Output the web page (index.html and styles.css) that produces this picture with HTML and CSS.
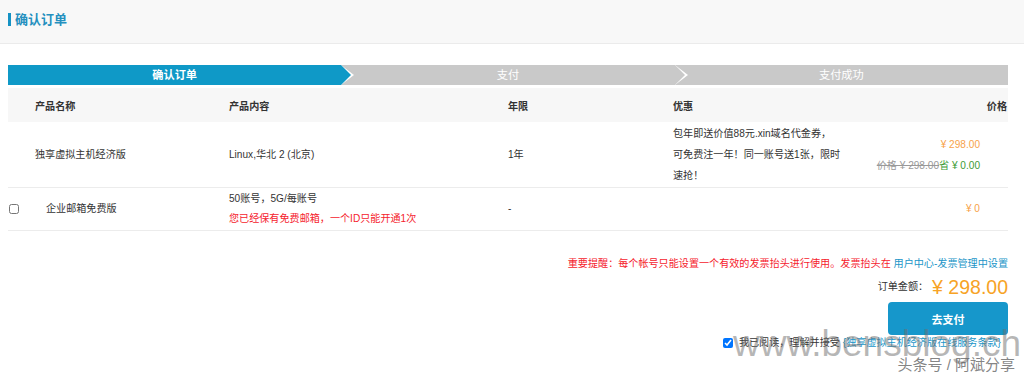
FILE: index.html
```html
<!DOCTYPE html>
<html lang="zh-CN">
  <head>
    <meta charset="UTF-8" />
    <title>确认订单</title>
    <link rel="stylesheet" href="styles.css">
  </head>
  <body>
    <div class="page-header">
      <h1 class="page-title">确认订单</h1>
    </div>

    <div class="main">
      <div class="steps">
        <div class="step active">确认订单</div>
        <div class="step">支付</div>
        <div class="step last">支付成功</div>
      </div>

      <table class="order-table">
        <colgroup>
          <col class="c-name" />
          <col class="c-content" />
          <col class="c-year" />
          <col class="c-promo" />
          <col class="c-price" />
        </colgroup>
        <thead>
          <tr>
            <th>产品名称</th>
            <th>产品内容</th>
            <th>年限</th>
            <th>优惠</th>
            <th class="price">价格</th>
          </tr>
        </thead>
        <tbody>
          <tr class="row-main">
            <td>独享虚拟主机经济版</td>
            <td>Linux,华北 2 (北京)</td>
            <td>1年</td>
            <td>包年即送价值88元.xin域名代金券，<br />可免费注一年！同一账号送1张，限时<br />速抢！</td>
            <td class="price">
              <div class="orange">¥ 298.00</div>
              <div><span class="old">价格 ¥ 298.00</span><span class="save">省 ¥ 0.00</span></div>
            </td>
          </tr>
          <tr class="row-extra">
            <td>
              <div class="name-check">
                <input type="checkbox" class="box" />
                <span>企业邮箱免费版</span>
              </div>
            </td>
            <td>
              <div>50账号，5G/每账号</div>
              <div class="warn">您已经保有免费邮箱，一个ID只能开通1次</div>
            </td>
            <td>-</td>
            <td></td>
            <td class="price"><span class="orange">¥ 0</span></td>
          </tr>
        </tbody>
      </table>

      <div class="summary">
        <p class="notice">重要提醒：每个帐号只能设置一个有效的发票抬头进行使用。发票抬头在 <a href="#">用户中心-发票管理中设置</a></p>
        <div class="total">订单金额：<span class="amount">¥ 298.00</span></div>
        <button class="pay-btn">去支付</button>
        <label class="agree">
          <input type="checkbox" class="box" checked />
          我已阅读，理解并接受 <a href="#">{独享虚拟主机经济版在线服务条款}</a>
        </label>
      </div>
    </div>

    <div class="watermark">
      <div class="wm-site">www.bensblog.ch</div>
      <div class="wm-name">头条号 / 阿斌分享</div>
    </div>
  </body>
</html>
```

FILE: styles.css
```css
body {
  margin: 0;
  font-family: "Liberation Sans", "Noto Sans CJK SC", sans-serif;
  font-size: 10.1px;
  color: #333;
  background-color: #fff;
  position: relative;
  height: 377px;
  overflow: hidden;
}

a {
  color: #1a95c8;
  text-decoration: none;
}

.page-header {
  height: 43px;
  background-color: #f8f8f8;
  border-bottom: 1px solid #ebebeb;
  padding-left: 8px;
  display: flex;
  align-items: center;
}

.page-title {
  margin: 0;
  font-size: 13px;
  font-weight: bold;
  line-height: 13px;
  color: #2590bf;
  border-left: 3px solid #1592c4;
  padding-left: 4px;
  margin-top: -4px;
}

.main {
  padding: 21px 16px 0 8px;
}

/* step bar */
.steps {
  display: flex;
  height: 20px;
}

.step {
  flex: 1;
  position: relative;
  background-color: #c9c9c9;
  color: #fff;
  text-align: center;
  line-height: 20px;
  font-size: 11.2px;
}

.step.active {
  background-color: #0f99c7;
  font-weight: bold;
}

.step::before,
.step::after {
  content: "";
  position: absolute;
  top: 0;
  width: 0;
  height: 0;
  border-top: 10px solid transparent;
  border-bottom: 10px solid transparent;
  z-index: 1;
}

.step::before {
  right: -13px;
  border-left: 13px solid #fff;
}

.step::after {
  right: -10px;
  border-left: 10px solid #c9c9c9;
}

.step.active::after {
  border-left-color: #0f99c7;
}

.step.last::before,
.step.last::after {
  display: none;
}

/* table */
.order-table {
  width: 1000px;
  border-collapse: collapse;
  margin-top: 3px;
  table-layout: fixed;
}

.c-name { width: 194px; }
.c-content { width: 279px; }
.c-year { width: 165px; }
.c-promo { width: 200px; }
.c-price { width: 162px; }

.order-table th {
  background-color: #f7f7f7;
  height: 34px;
  text-align: left;
  font-weight: bold;
  padding: 0 0 0 27px;
}

.order-table th.price {
  text-align: right;
  padding-right: 1px;
}

.order-table td {
  padding: 1px 0 1px 27px;
  border-bottom: 1px solid #ececec;
  vertical-align: middle;
}

.order-table td.price {
  text-align: right;
  padding-right: 28px;
  padding-left: 0;
}

.row-main td {
  height: 62px;
  line-height: 21px;
}

.row-extra td {
  height: 39px;
  line-height: 20px;
}

.row-extra td:first-child {
  padding-left: 0;
}

.name-check {
  display: flex;
  align-items: center;
}

.name-check span {
  margin-left: 27px;
}

.box {
  width: 10px;
  height: 10px;
  margin: 0 0 0 1px;
}

.orange {
  color: #f7a24a;
}

.old {
  color: #999;
  text-decoration: line-through;
}

.save {
  color: #3d9b35;
}

.warn {
  color: #f5222d;
}

/* summary */
.summary {
  display: flex;
  flex-direction: column;
  align-items: flex-end;
}

.notice {
  margin: 26px 0 0;
  color: #f5222d;
  line-height: 14px;
}

.total {
  margin-top: 5px;
  display: flex;
  align-items: center;
  line-height: 22px;
}

.amount {
  color: #f7a325;
  font-size: 19.5px;
  margin-left: 4px;
}

.pay-btn {
  margin-top: 4px;
  width: 120px;
  height: 33px;
  border: none;
  border-radius: 4px;
  background-color: #1697cb;
  color: #fff;
  font-family: inherit;
  font-size: 11px;
  font-weight: bold;
  cursor: pointer;
}

.agree {
  margin-top: 2px;
  display: flex;
  align-items: center;
  line-height: 12px;
  white-space: nowrap;
  margin-right: 7px;
}

.agree .box {
  margin-right: 6px;
}

.agree a {
  margin-left: 3px;
}

/* watermark over the corner */
.watermark {
  position: absolute;
  right: 9px;
  bottom: 3px;
  text-align: right;
  pointer-events: none;
}

.wm-site {
  font-size: 37px;
  line-height: 32px;
  color: rgba(110, 110, 110, 0.5);
  margin-right: -6px;
}

.wm-name {
  font-size: 15px;
  line-height: 18px;
  color: rgba(100, 100, 100, 0.8);
  margin-top: -4px;
}
```
